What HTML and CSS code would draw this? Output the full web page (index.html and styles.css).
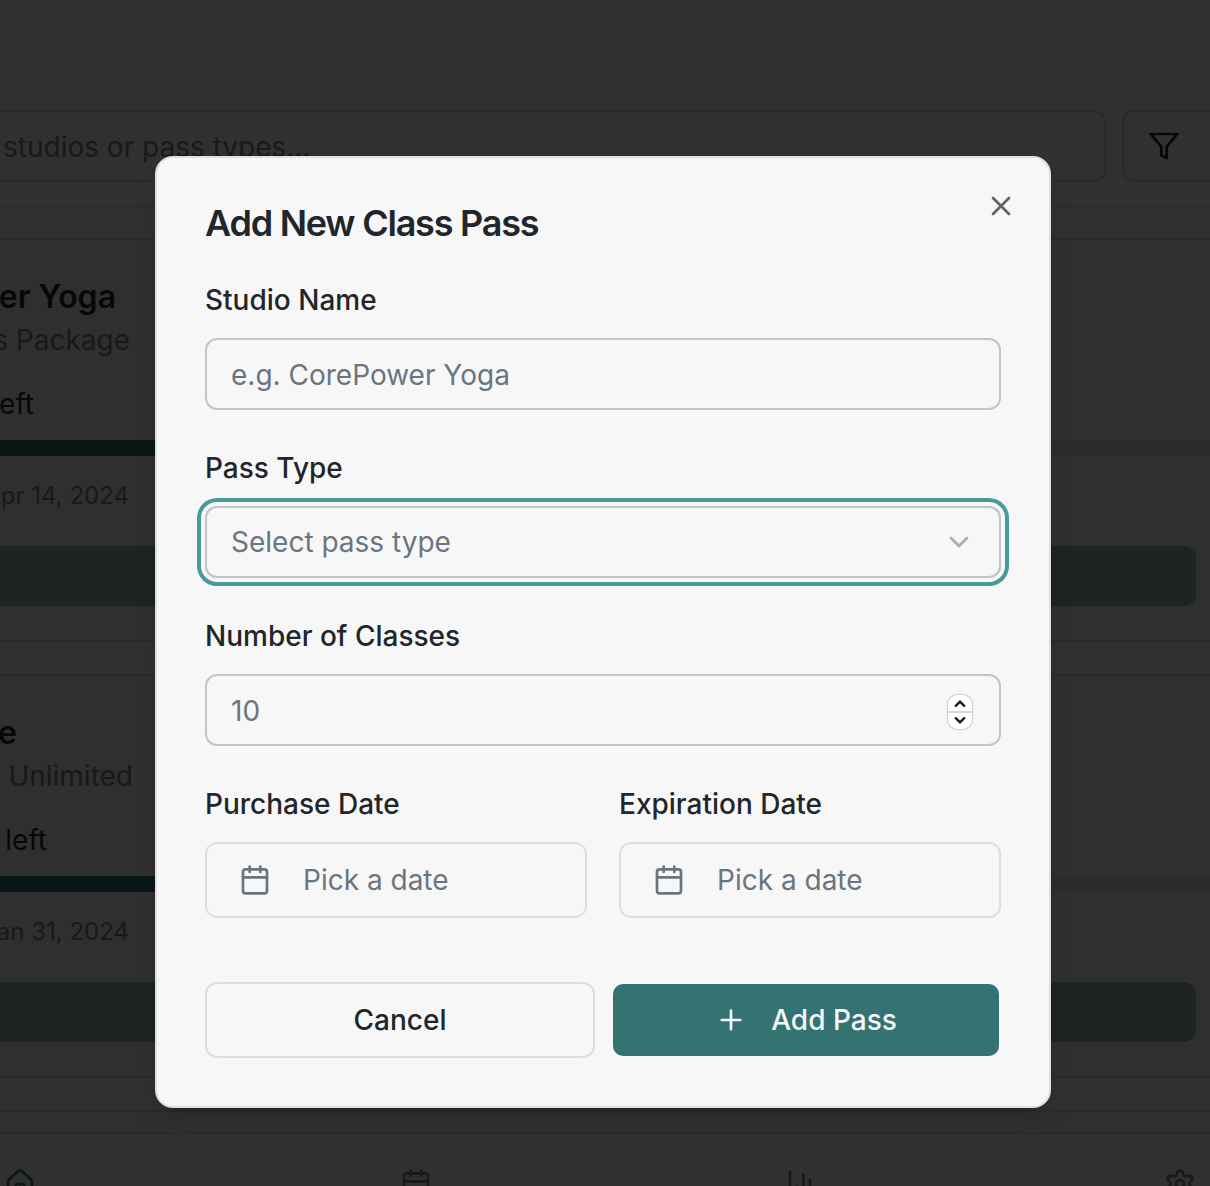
FILE: index.html
```
<!DOCTYPE html>
<html lang="en">
<head>
<meta charset="utf-8">
<title>Add New Class Pass</title>
<link rel="stylesheet" href="styles.css">
</head>
<body>
<div class="page">
  <div class="toolbar">
    <div class="search">studios or pass types...</div>
    <div class="filter">
      <svg class="icon" viewBox="0 0 24 24"><path d="M22 3H2l8 9.46V19l4 2v-8.54L22 3z"/></svg>
    </div>
  </div>
  <div class="list">
    <section class="card">
      <div class="card-text">
        <h3 class="studio">er Yoga</h3>
        <p class="package">s Package</p>
        <p class="left">eft</p>
      </div>
      <div class="progress"><div class="progress-fill"></div></div>
      <p class="expires">pr 14, 2024</p>
      <div class="use-button"></div>
    </section>
    <section class="card card-second">
      <div class="card-text">
        <h3 class="studio">e</h3>
        <p class="package">Unlimited</p>
        <p class="left">left</p>
      </div>
      <div class="progress"><div class="progress-fill"></div></div>
      <p class="expires">an 31, 2024</p>
      <div class="use-button"></div>
    </section>
    <section class="card card-peek"></section>
  </div>
  <nav class="nav">
    <svg class="icon nav-active" viewBox="0 0 24 24"><path d="M15 21v-8a1 1 0 0 0-1-1h-4a1 1 0 0 0-1 1v8"/><path d="M3 10a2 2 0 0 1 .709-1.528l7-5.999a2 2 0 0 1 2.582 0l7 5.999A2 2 0 0 1 21 10v9a2 2 0 0 1-2 2H5a2 2 0 0 1-2-2z"/></svg>
    <svg class="icon nav-calendar" viewBox="0 0 24 24"><path d="M8 2v4M16 2v4M3 10h18"/><rect x="3" y="4" width="18" height="18" rx="2"/></svg>
    <svg class="icon nav-chart" viewBox="0 0 24 24"><path d="M3 3v18h18M18 17V9M13 17V5M8 17v-3"/></svg>
    <svg class="icon nav-settings" viewBox="0 0 24 24"><path d="M9.671 4.136a2.34 2.34 0 0 1 4.659 0 2.34 2.34 0 0 0 3.319 1.915 2.34 2.34 0 0 1 2.33 4.033 2.34 2.34 0 0 0 0 3.831 2.34 2.34 0 0 1-2.33 4.033 2.34 2.34 0 0 0-3.319 1.915 2.34 2.34 0 0 1-4.659 0 2.34 2.34 0 0 0-3.32-1.915 2.34 2.34 0 0 1-2.33-4.033 2.34 2.34 0 0 0 0-3.831A2.34 2.34 0 0 1 6.35 6.051a2.34 2.34 0 0 0 3.319-1.915"/><circle cx="12" cy="12" r="3"/></svg>
  </nav>
</div>

<div class="dialog" role="dialog" aria-labelledby="dialog-title">
  <h2 class="dialog-title" id="dialog-title">Add New Class Pass</h2>
  <svg class="icon close" viewBox="0 0 24 24"><path d="M18 6 6 18M6 6l12 12"/></svg>
  <div class="form">
    <div class="field">
      <div class="label">Studio Name</div>
      <div class="control control-input"><span>e.g. CorePower Yoga</span></div>
    </div>
    <div class="field">
      <div class="label">Pass Type</div>
      <div class="control control-focused">
        <span>Select pass type</span>
        <svg class="icon chevron" viewBox="0 0 24 24"><path d="m6 9 6 6 6-6"/></svg>
      </div>
    </div>
    <div class="field">
      <div class="label">Number of Classes</div>
      <div class="control control-input">
        <span>10</span>
        <span class="stepper">
          <svg class="step" viewBox="0 0 24 17"><path d="M7.5 11.5 12 7l4.5 4.5"/></svg>
          <svg class="step" viewBox="0 0 24 17"><path d="M7.5 5.5 12 10l4.5-4.5"/></svg>
        </span>
      </div>
    </div>
    <div class="dates">
      <div class="field">
        <div class="label">Purchase Date</div>
        <div class="date">
          <svg class="icon" viewBox="0 0 24 24"><path d="M8 2v4M16 2v4M3 10h18"/><rect x="3" y="4" width="18" height="18" rx="2"/></svg>
          <span>Pick a date</span>
        </div>
      </div>
      <div class="field">
        <div class="label">Expiration Date</div>
        <div class="date">
          <svg class="icon" viewBox="0 0 24 24"><path d="M8 2v4M16 2v4M3 10h18"/><rect x="3" y="4" width="18" height="18" rx="2"/></svg>
          <span>Pick a date</span>
        </div>
      </div>
    </div>
  </div>
  <div class="actions">
    <div class="button">Cancel</div>
    <div class="button button-primary">
      <svg class="icon" viewBox="0 0 24 24"><path d="M5 12h14M12 5v14"/></svg>
      <span>Add Pass</span>
    </div>
  </div>
</div>
</body>
</html>
```
FILE: styles.css
```
* { box-sizing: border-box; margin: 0; padding: 0; }

body {
  font-family: Inter, "Liberation Sans", sans-serif;
  font-size: 28px;
  background: #303030;
  height: 1186px;
  overflow: hidden;
  position: relative;
}

.icon {
  width: 32px;
  height: 32px;
  flex: none;
  display: block;
  fill: none;
  stroke: currentColor;
  stroke-width: 2;
  stroke-linecap: round;
  stroke-linejoin: round;
}

/* Dimmed page behind the dialog */
.page {
  height: 1186px;
  padding-top: 110px;
  display: flex;
  flex-direction: column;
  overflow: hidden;
  color: #060808;
}
.toolbar { display: flex; gap: 16px; height: 72px; flex: none; }
.search {
  width: 1106px;
  flex: none;
  display: flex;
  align-items: center;
  padding: 2px 0 0 3px;
  border: 2px solid #292a2a;
  border-left: 0;
  border-radius: 0 12px 12px 0;
  color: #17191b;
}
.filter {
  flex: 1;
  display: flex;
  align-items: center;
  padding-left: 24px;
  border: 2px solid #292a2a;
  border-right: 0;
  border-radius: 12px 0 0 12px;
}
.list {
  flex: none;
  height: 926px;
  margin-top: 24px;
  padding-top: 30px;
  border-top: 2px solid #2c2c2c;
  display: flex;
  flex-direction: column;
  gap: 32px;
}
.card {
  height: 404px;
  flex: none;
  padding-top: 37px;
  border-top: 2px solid #2b2b2b;
  border-bottom: 2px solid #2b2b2b;
  background: #2f2f2f;
}
.card-peek { height: 22px; padding: 0; border-bottom: 0; }
.card-text { width: 130px; display: flex; flex-direction: column; white-space: nowrap; }
.studio { font-size: 32px; font-weight: 600; line-height: 40px; align-self: flex-end; margin-right: 14px; }
.package { line-height: 40px; margin-top: 3px; align-self: flex-end; color: #17191b; }
.left { line-height: 40px; margin: 24px 96px 0 0; align-self: flex-end; }
.card-second .studio { margin-right: 113px; }
.card-second .package { margin-right: -3px; }
.card-second .left { margin-right: 83px; }
.progress { height: 16px; margin-top: 16px; background: #2b2d2c; }
.progress-fill { height: 16px; width: 50%; background: #0a1716; }
.expires {
  width: 129px;
  margin-top: 24px;
  display: flex;
  justify-content: flex-end;
  font-size: 24px;
  line-height: 32px;
  white-space: nowrap;
  color: #17191b;
}
.use-button { width: 1196px; height: 60px; margin-top: 34px; border-radius: 0 12px 12px 0; background: #1d2423; }
.nav {
  flex: none;
  height: 54px;
  padding: 34px 14px 0 4px;
  border-top: 2px solid #2b2b2b;
  display: flex;
  background: #303030;
  color: #17191b;
}
.nav-active { color: #0a1716; }
.nav-calendar { margin-left: 364px; }
.nav-chart { margin-left: 354px; }
.nav-settings { margin-left: auto; }

/* Dialog */
.dialog {
  position: absolute;
  left: 155px;
  top: 156px;
  width: 896px;
  height: 952px;
  padding: 47px 48px 48px;
  border: 2px solid #dfdfe3;
  border-radius: 18px;
  background: #f7f7f7;
  color: #22262b;
  box-shadow: 0 20px 30px -6px rgba(0, 0, 0, .1), 0 8px 12px -8px rgba(0, 0, 0, .2);
}
.dialog-title { font-size: 36px; line-height: 36px; font-weight: 600; letter-spacing: -1.23px; }
.close { position: absolute; top: 32px; right: 32px; opacity: .7; }
.form { display: flex; flex-direction: column; gap: 44px; margin-top: 45px; }
.field { display: flex; flex-direction: column; gap: 24px; }
.label { line-height: 28px; font-weight: 500; }
.control {
  height: 72px;
  padding: 0 24px;
  display: flex;
  align-items: center;
  justify-content: space-between;
  border: 2px solid #c0c5ca;
  border-radius: 12px;
  color: #6b757e;
}
.control-input { padding-top: 2px; }
.control-focused { box-shadow: 0 0 0 4px #f7f7f7, 0 0 0 8px #489b9b; }
.chevron { color: #22262b; opacity: .35; }
.stepper {
  width: 24px;
  height: 34px;
  margin: 2px 3px 0 0;
  border-radius: 9px;
  background: #fff;
  box-shadow: 0 0 2px rgba(0, 0, 0, .5);
  display: flex;
  flex-direction: column;
}
.step { display: block; width: 24px; height: 17px; fill: none; stroke: #202020; stroke-width: 2.6; stroke-linecap: round; stroke-linejoin: round; }
.step:first-child { border-bottom: 2px solid #d8d8d8; height: 18px; }
.step:last-child { height: 16px; }
.dates { display: grid; grid-template-columns: 1fr 1fr; gap: 32px; }
.date {
  height: 76px;
  padding: 0 32px;
  display: flex;
  align-items: center;
  gap: 32px;
  border: 2px solid #dedede;
  border-radius: 12px;
  color: #6b757e;
}
.actions { display: grid; grid-template-columns: 1fr 1fr; gap: 16px; margin-top: 64px; }
.button {
  height: 76px;
  display: flex;
  align-items: center;
  justify-content: center;
  gap: 24px;
  border: 2px solid #dedede;
  border-radius: 12px;
  font-weight: 500;
}
.button-primary { border-color: transparent; background: #357272; background-clip: padding-box; color: #f3f7f7; }
```
